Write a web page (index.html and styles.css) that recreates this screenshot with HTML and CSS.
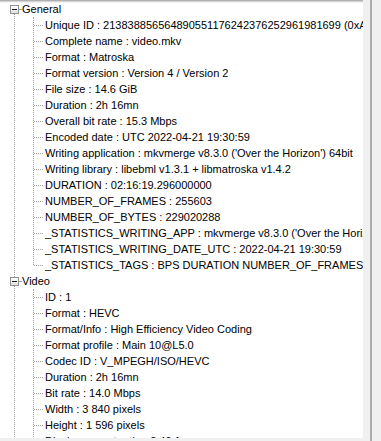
FILE: index.html
```html
<!DOCTYPE html>
<html lang="en">
<head>
    <meta charset="UTF-8">
    <meta name="viewport" content="width=device-width, initial-scale=1.0">
    <title>MediaInfo - Tree</title>
    <link rel="stylesheet" href="styles.css">
</head>
<body>
    <div class="window">
        <div class="panel">
            <ul class="tree">
                <li class="node open">
                    <div class="label"><span class="toggle"></span>General</div>
                    <ul class="children">
                        <li><div class="label">Unique ID : 213838856564890551176242376252961981699 (0xA0DE6A8C62F1B3DCB1F7F0A6A2E4C2F3)</div></li>
                        <li><div class="label">Complete name : video.mkv</div></li>
                        <li><div class="label">Format : Matroska</div></li>
                        <li><div class="label">Format version : Version 4 / Version 2</div></li>
                        <li><div class="label">File size : 14.6 GiB</div></li>
                        <li><div class="label">Duration : 2h 16mn</div></li>
                        <li><div class="label">Overall bit rate : 15.3 Mbps</div></li>
                        <li><div class="label">Encoded date : UTC 2022-04-21 19:30:59</div></li>
                        <li><div class="label">Writing application : mkvmerge v8.3.0 ('Over the Horizon') 64bit</div></li>
                        <li><div class="label">Writing library : libebml v1.3.1 + libmatroska v1.4.2</div></li>
                        <li><div class="label">DURATION : 02:16:19.296000000</div></li>
                        <li><div class="label">NUMBER_OF_FRAMES : 255603</div></li>
                        <li><div class="label">NUMBER_OF_BYTES : 229020288</div></li>
                        <li><div class="label">_STATISTICS_WRITING_APP : mkvmerge v8.3.0 ('Over the Horizon') 64bit</div></li>
                        <li><div class="label">_STATISTICS_WRITING_DATE_UTC : 2022-04-21 19:30:59</div></li>
                        <li><div class="label">_STATISTICS_TAGS : BPS DURATION NUMBER_OF_FRAMES NUMBER_OF_BYTES</div></li>
                    </ul>
                </li>
                <li class="node open">
                    <div class="label"><span class="toggle"></span>Video</div>
                    <ul class="children more">
                        <li><div class="label">ID : 1</div></li>
                        <li><div class="label">Format : HEVC</div></li>
                        <li><div class="label">Format/Info : High Efficiency Video Coding</div></li>
                        <li><div class="label">Format profile : Main 10@L5.0</div></li>
                        <li><div class="label">Codec ID : V_MPEGH/ISO/HEVC</div></li>
                        <li><div class="label">Duration : 2h 16mn</div></li>
                        <li><div class="label">Bit rate : 14.0 Mbps</div></li>
                        <li><div class="label">Width : 3 840 pixels</div></li>
                        <li><div class="label">Height : 1 596 pixels</div></li>
                        <li><div class="label">Display aspect ratio : 2.40:1</div></li>
                        <li><div class="label">Frame rate mode : Constant</div></li>
                    </ul>
                </li>
            </ul>
        </div>
        <div class="splitter"></div>
    </div>
</body>
</html>
```

FILE: styles.css
```css
html, body {
    margin: 0;
    padding: 0;
    height: 100%;
    overflow: hidden;
}

body {
    background-color: #f0f0f0;
    font-family: "Liberation Sans", Arial, sans-serif;
    font-size: 11px;
    color: #000;
}

.window {
    display: flex;
    height: 100%;
}

.panel {
    width: 363px;
    height: 438px;
    flex: none;
    overflow: hidden;
    background: linear-gradient(#9c9c9c 0, #c4c4c4 1px, #e6e6e6 2px, #fff 3px);
    border-bottom-right-radius: 2px;
    padding-top: 1px;
    box-sizing: border-box;
}

.splitter {
    width: 2px;
    margin-left: 7px;
    background-color: #acacac;
}

.tree,
.children {
    list-style-type: none;
    margin: 0;
    padding: 0;
}

.tree {
    position: relative;
}

/* root level line */
.tree::before {
    content: "";
    position: absolute;
    left: 14px;
    top: 13px;
    bottom: 0;
    border-left: 1px dotted #a0a0a0;
}

.node {
    position: relative;
}

.label {
    position: relative;
    height: 16px;
    line-height: 16px;
    white-space: nowrap;
}

.node > .label {
    padding-left: 22px;
}

.node > .label::before {
    content: "";
    position: absolute;
    left: 19px;
    top: 8px;
    width: 2px;
    border-top: 1px dotted #a0a0a0;
}

.toggle {
    position: absolute;
    left: 10px;
    top: 4px;
    width: 7px;
    height: 7px;
    border: 1px solid #919191;
    background: linear-gradient(#fff, #e2e2e2);
    z-index: 1;
}

.toggle::after {
    content: "";
    position: absolute;
    left: 1px;
    top: 3px;
    width: 5px;
    height: 1px;
    background-color: #1e1e1e;
}

.children {
    position: relative;
}

.children::before {
    content: "";
    position: absolute;
    left: 33px;
    top: 0;
    bottom: 8px;
    border-left: 1px dotted #a0a0a0;
}

.children.more::before {
    bottom: 0;
}

.children > li > .label {
    padding-left: 45px;
}

.children > li > .label::before {
    content: "";
    position: absolute;
    left: 34px;
    top: 8px;
    width: 9px;
    border-top: 1px dotted #a0a0a0;
}
```
